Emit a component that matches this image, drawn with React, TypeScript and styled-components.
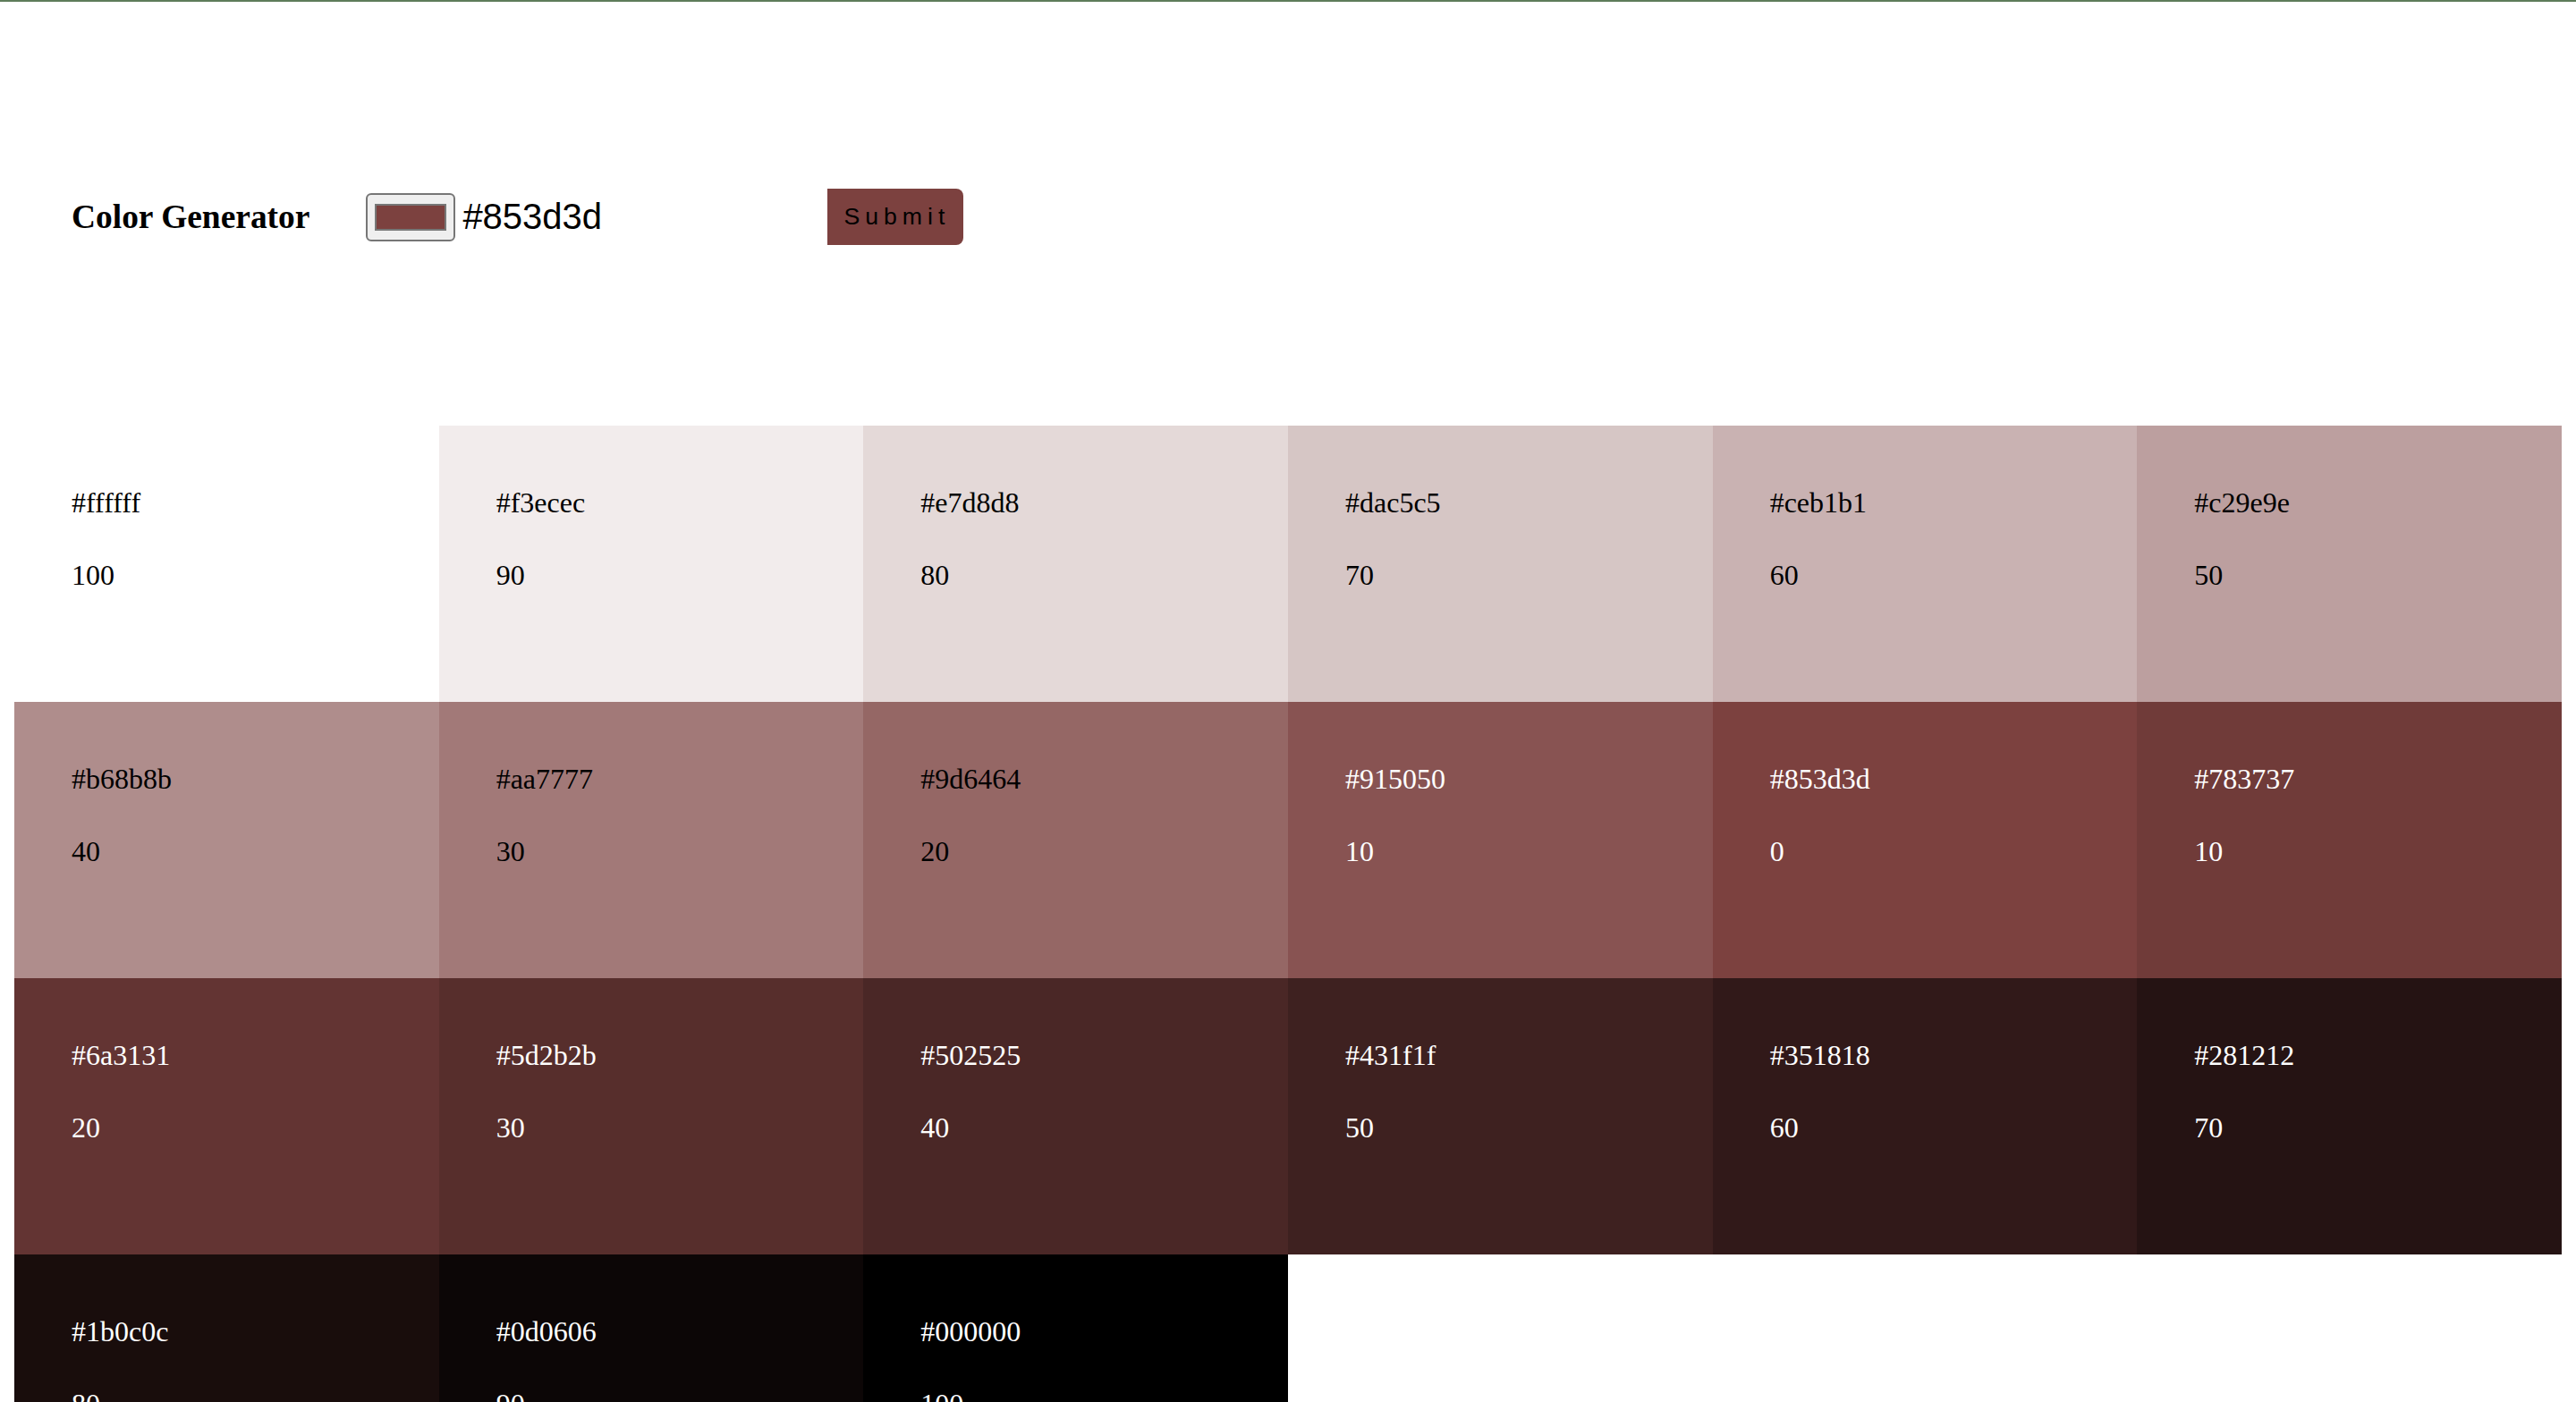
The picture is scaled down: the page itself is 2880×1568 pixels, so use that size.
import React, { useMemo, useState } from "react";
import styled, { createGlobalStyle } from "styled-components";

const GlobalStyle = createGlobalStyle`
  html {
    border-top: 2px solid #5e7c5a;
    background: #ffffff;
    overflow: hidden;
  }
  body {
    margin: 14px 16px 16px;
    font-family: "Liberation Serif", "Times New Roman", serif;
    color: #000000;
  }
  ::-webkit-scrollbar { display: none; }
`;

/* The reference was captured in a Display P3 colour space: convert sRGB hex to the P3 numbers it shows. */
const toLinear = (c: number) => {
  const v = c / 255;
  return v <= 0.04045 ? v / 12.92 : Math.pow((v + 0.055) / 1.055, 2.4);
};
const fromLinear = (v: number) => {
  const c = v <= 0.0031308 ? v * 12.92 : 1.055 * Math.pow(v, 1 / 2.4) - 0.055;
  return Math.max(0, Math.min(255, Math.round(c * 255)));
};
const hexToRgb = (hex: string) => {
  const h = hex.replace("#", "");
  return [0, 2, 4].map((i) => parseInt(h.slice(i, i + 2), 16));
};
const rgbToHex = (rgb: number[]) =>
  "#" + rgb.map((c) => c.toString(16).padStart(2, "0")).join("");

const toDisplay = (hex: string) => {
  const [r, g, b] = hexToRgb(hex).map(toLinear);
  const R = 0.8225 * r + 0.1774 * g;
  const G = 0.0332 * r + 0.9669 * g;
  const B = 0.0171 * r + 0.0724 * g + 0.9108 * b;
  return rgbToHex([fromLinear(R), fromLinear(G), fromLinear(B)]);
};

type Shade = { hex: string; weight: number; light: boolean };

const buildPalette = (base: string): Shade[] => {
  const rgb = hexToRgb(base);
  const out: Shade[] = [];
  for (let w = 100; w >= 10; w -= 10) {
    out.push({
      hex: rgbToHex(rgb.map((c) => Math.round(c + ((255 - c) * w) / 100))),
      weight: w,
      light: false,
    });
  }
  out.push({ hex: base, weight: 0, light: true });
  for (let w = 10; w <= 100; w += 10) {
    out.push({
      hex: rgbToHex(rgb.map((c) => Math.round((c * (100 - w)) / 100))),
      weight: w,
      light: true,
    });
  }
  // the last tint before the base colour already uses light text
  out[9].light = true;
  return out;
};

const Header = styled.section`
  padding: 195px 64px 202px;
`;

const Form = styled.form`
  display: flex;
  align-items: center;
  margin: 0;
`;

const Title = styled.h3`
  margin: 0 63px 0 0;
  font-family: "Liberation Serif", "Times New Roman", serif;
  font-size: 37.44px;
  font-weight: bold;
`;

const ColorPicker = styled.input`
  -webkit-appearance: none;
  appearance: none;
  box-sizing: border-box;
  width: 100px;
  height: 54px;
  margin: 0;
  padding: 2px 4px;
  border: 2px solid #767676;
  border-radius: 6px;
  background: #efefef;
  cursor: pointer;

  &::-webkit-color-swatch-wrapper {
    padding: 8px 4px;
  }
  &::-webkit-color-swatch {
    border: 2px solid #777777;
    border-radius: 0;
  }
`;

const HexField = styled.input`
  box-sizing: border-box;
  width: 416px;
  margin: 0;
  padding: 0 0 0 8px;
  border: none;
  outline: none;
  background: transparent;
  font-family: "Liberation Sans", Arial, sans-serif;
  font-size: 40px;
  color: #000000;
`;

const SubmitButton = styled.button<{ $bg: string }>`
  box-sizing: border-box;
  height: 63px;
  margin: 0;
  padding: 0 15px 0 18px;
  border: none;
  border-radius: 0 8px 8px 0;
  background: ${(p) => p.$bg};
  color: #000000;
  font-family: "Liberation Sans", Arial, sans-serif;
  font-size: 26.67px;
  letter-spacing: 6px;
  cursor: pointer;
`;

const Grid = styled.section`
  display: grid;
  grid-template-columns: repeat(6, 1fr);
`;

const Tile = styled.article<{ $bg: string; $light: boolean }>`
  box-sizing: border-box;
  height: 309px;
  padding: 68px 64px 0;
  display: flex;
  flex-direction: column;
  gap: 45px;
  background: ${(p) => p.$bg};
  color: ${(p) => (p.$light ? "#ffffff" : "#000000")};
  font-family: "Liberation Serif", "Times New Roman", serif;
  font-size: 32px;
  line-height: 36px;
`;

const TileText = styled.p`
  margin: 0;
`;

export default function App() {
  const [color, setColor] = useState("#853d3d");
  const [text, setText] = useState("#853d3d");
  const palette = useMemo(() => buildPalette(color), [color]);

  const submit = (e: React.FormEvent) => {
    e.preventDefault();
    if (/^#[0-9a-fA-F]{6}$/.test(text)) setColor(text.toLowerCase());
  };

  return (
    <>
      <GlobalStyle />
      <Header>
        <Form onSubmit={submit}>
          <Title>Color Generator</Title>
          <ColorPicker
            type="color"
            value={toDisplay(color)}
            onChange={(e) => {
              setText(e.target.value);
              setColor(e.target.value);
            }}
          />
          <HexField
            type="text"
            value={text}
            onChange={(e) => setText(e.target.value)}
          />
          <SubmitButton type="submit" $bg={toDisplay(color)}>
            Submit
          </SubmitButton>
        </Form>
      </Header>
      <Grid>
        {palette.map((s, i) => (
          <Tile key={i} $bg={toDisplay(s.hex)} $light={s.light}>
            <TileText>{s.hex}</TileText>
            <TileText>{s.weight}</TileText>
          </Tile>
        ))}
      </Grid>
    </>
  );
}
